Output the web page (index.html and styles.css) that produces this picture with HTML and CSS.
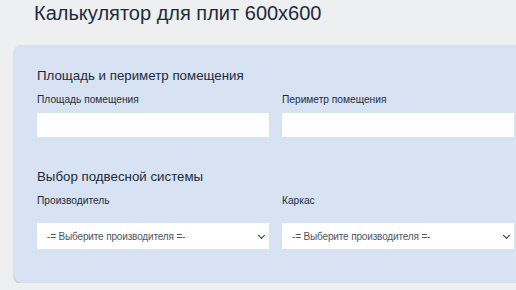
FILE: index.html
```html
<!DOCTYPE html>
<html lang="ru">
<head>
    <meta charset="UTF-8">
    <meta name="viewport" content="width=device-width, initial-scale=1.0">
    <title>Калькулятор для плит 600x600</title>
    <link rel="stylesheet" href="styles.css">
</head>
<body>
    <h1 class="page-title">Калькулятор для плит 600x600</h1>

    <div class="calc-panel">
        <section class="calc-section">
            <h3>Площадь и периметр помещения</h3>
            <div class="field-row">
                <div class="field">
                    <label for="area">Площадь помещения</label>
                    <input type="text" id="area">
                </div>
                <div class="field">
                    <label for="perimeter">Периметр помещения</label>
                    <input type="text" id="perimeter">
                </div>
            </div>
        </section>

        <section class="calc-section">
            <h3>Выбор подвесной системы</h3>
            <div class="field-row">
                <div class="field">
                    <label for="maker">Производитель</label>
                    <div class="select-wrap">
                        <select id="maker">
                            <option>-= Выберите производителя =-</option>
                        </select>
                    </div>
                </div>
                <div class="field">
                    <label for="frame">Каркас</label>
                    <div class="select-wrap">
                        <select id="frame">
                            <option>-= Выберите производителя =-</option>
                        </select>
                    </div>
                </div>
            </div>
        </section>
    </div>
</body>
</html>
```

FILE: styles.css
```css
:root {
    --page-bg: #edeff1;
    --panel-bg: #d7e3f2;
    --text-color: #1e2b3c;
    --muted: #4f555c;
    --white: #ffffff;
}

* {
    margin: 0;
    padding: 0;
    box-sizing: border-box;
}

html, body {
    overflow: hidden;
}

body {
    font-family: "Liberation Sans", Arial, sans-serif;
    background-color: var(--page-bg);
    color: var(--text-color);
    padding: 0 0 0 14px;
    width: 560px;
}

.page-title {
    font-size: 20px;
    font-weight: 400;
    line-height: 24px;
    padding: 1px 0 0 20px;
    height: 45px;
}

.calc-panel {
    background-color: var(--panel-bg);
    border-radius: 8px;
    box-shadow: 0 1px 2px rgba(0, 0, 0, 0.25);
    padding: 22px 23px 34px;
    width: 540px;
}

.calc-section + .calc-section {
    margin-top: 31px;
}

h3 {
    font-size: 13.3px;
    font-weight: 400;
    line-height: 17px;
    margin-bottom: 9px;
}

.field-row {
    display: grid;
    grid-template-columns: 232px 232px;
    column-gap: 13px;
}

.field {
    display: flex;
    flex-direction: column;
}

label {
    font-size: 10.2px;
    line-height: 13px;
    margin-bottom: 7px;
}

.calc-section:last-child label {
    margin-bottom: 16px;
}

input, select {
    border: none;
    border-radius: 0;
    background-color: var(--white);
    font-family: inherit;
    color: var(--muted);
    outline: none;
}

input {
    height: 24px;
    padding: 0 8px;
    font-size: 12px;
}

.select-wrap {
    position: relative;
}

.select-wrap::after {
    content: "";
    position: absolute;
    right: 5px;
    top: 10px;
    width: 4px;
    height: 4px;
    border-right: 1.5px solid #2b3440;
    border-bottom: 1.5px solid #2b3440;
    transform: rotate(45deg);
    pointer-events: none;
}

select {
    -webkit-appearance: none;
    appearance: none;
    width: 100%;
    height: 26px;
    padding: 0 20px 0 10px;
    font-size: 10px;
    letter-spacing: -0.15px;
}
```
